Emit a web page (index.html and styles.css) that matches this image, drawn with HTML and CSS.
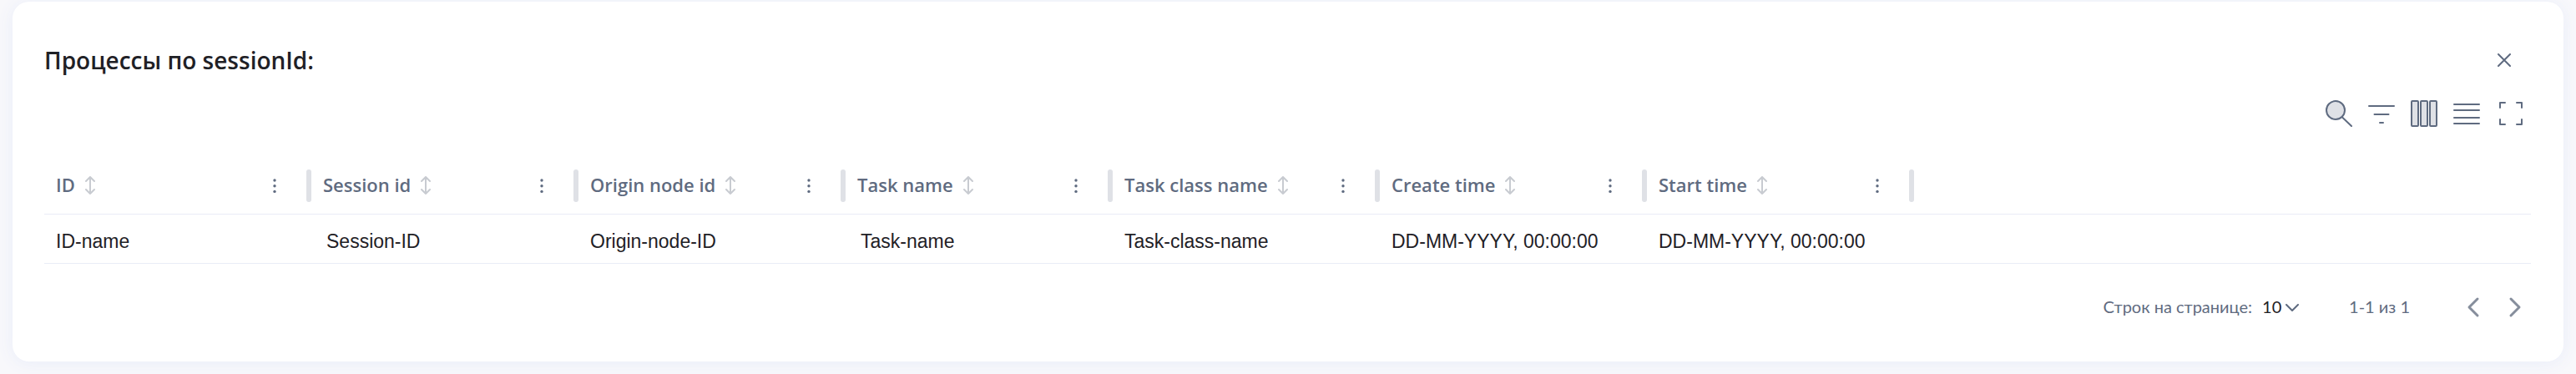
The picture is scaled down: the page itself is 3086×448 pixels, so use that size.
FILE: index.html
```html
<!DOCTYPE html>
<html lang="ru">
<head>
	<meta charset="UTF-8">
	<title>Процессы</title>
	<link rel="stylesheet" href="styles.css">
</head>
<body>
	<!-- общие иконки таблицы -->
	<svg class="sprite" aria-hidden="true">
		<symbol id="sort" viewBox="0 0 12 22"><path d="M6 1v20M1 6l5-5 5 5M1 16l5 5 5-5"/></symbol>
		<symbol id="dots" viewBox="0 0 4 18"><circle cx="2" cy="2" r="1.7"/><circle cx="2" cy="8.7" r="1.7"/><circle cx="2" cy="15.4" r="1.7"/></symbol>
	</svg>
	<main class="card">
		<div class="card-head">
			<h1>Процессы по sessionId:</h1>
			<button class="icon-btn" aria-label="Закрыть"><svg width="16" height="16" viewBox="0 0 16 16"><path d="M1 1l14 14M15 1L1 15"/></svg></button>
		</div>
		<div class="toolbar">
			<button class="icon-btn" aria-label="Поиск"><svg width="32" height="32" viewBox="0 0 32 32"><circle class="fill" cx="12" cy="12" r="11"/><path d="M20 20.500l11 10.500"/></svg></button>
			<button class="icon-btn" aria-label="Фильтр"><svg width="32" height="32" viewBox="0 0 32 32"><path d="M1 7h30M7.500 17h17M14 27h4"/></svg></button>
			<button class="icon-btn" aria-label="Колонки"><svg width="32" height="32" viewBox="0 0 32 32"><rect class="fill" x="1" y="1" width="8" height="30" rx="1"/><rect class="fill" x="12" y="1" width="8" height="30" rx="1"/><rect class="fill" x="23" y="1" width="8" height="30" rx="1"/></svg></button>
			<button class="icon-btn" aria-label="Плотность"><svg width="32" height="32" viewBox="0 0 32 32"><path d="M1 5h30M1 12h30M1 21h30M1 28h30"/></svg></button>
			<button class="icon-btn wide" aria-label="На весь экран"><svg width="32" height="32" viewBox="0 0 32 32"><path d="M3 9V3h6M23 3h6v6M29 23v6h-6M9 29H3v-6"/></svg></button>
		</div>
		<table>
			<colgroup>
				<col class="col" span="7">
				<col>
			</colgroup>
			<thead>
				<tr>
					<th><div class="th"><span>ID</span><svg class="sort"><use href="#sort"/></svg><button class="dots" aria-label="Меню"><svg><use href="#dots"/></svg></button><i class="handle"></i></div></th>
					<th><div class="th"><span>Session id</span><svg class="sort"><use href="#sort"/></svg><button class="dots" aria-label="Меню"><svg><use href="#dots"/></svg></button><i class="handle"></i></div></th>
					<th><div class="th"><span>Origin node id</span><svg class="sort"><use href="#sort"/></svg><button class="dots" aria-label="Меню"><svg><use href="#dots"/></svg></button><i class="handle"></i></div></th>
					<th><div class="th"><span>Task name</span><svg class="sort"><use href="#sort"/></svg><button class="dots" aria-label="Меню"><svg><use href="#dots"/></svg></button><i class="handle"></i></div></th>
					<th><div class="th"><span>Task class name</span><svg class="sort"><use href="#sort"/></svg><button class="dots" aria-label="Меню"><svg><use href="#dots"/></svg></button><i class="handle"></i></div></th>
					<th><div class="th"><span>Create time</span><svg class="sort"><use href="#sort"/></svg><button class="dots" aria-label="Меню"><svg><use href="#dots"/></svg></button><i class="handle"></i></div></th>
					<th><div class="th"><span>Start time</span><svg class="sort"><use href="#sort"/></svg><button class="dots" aria-label="Меню"><svg><use href="#dots"/></svg></button><i class="handle"></i></div></th>
					<td></td>
				</tr>
			</thead>
			<tbody>
				<tr>
					<td>ID-name</td>
					<td class="name">Session-ID</td>
					<td>Origin-node-ID</td>
					<td class="name">Task-name</td>
					<td>Task-class-name</td>
					<td>DD-MM-YYYY, 00:00:00</td>
					<td>DD-MM-YYYY, 00:00:00</td>
					<td></td>
				</tr>
			</tbody>
		</table>
		<div class="pager">
			<div class="rows">
				<label for="rows">Строк на странице:</label>
				<select id="rows"><option>10</option><option>20</option><option>50</option></select>
				<svg width="16" height="10" viewBox="0 0 16 10"><path d="M1 1l7 7 7-7"/></svg>
			</div>
			<span class="range">1-1 из 1</span>
			<div class="pages">
				<button class="icon-btn" aria-label="Назад"><svg width="12" height="22" viewBox="0 0 12 22"><path d="M11 1L1 11l10 10"/></svg></button>
				<button class="icon-btn" aria-label="Вперёд"><svg width="12" height="22" viewBox="0 0 12 22"><path d="M1 1l10 10L1 21"/></svg></button>
			</div>
		</div>
	</main>
</body>
</html>
```
FILE: styles.css
```css
* {margin:0; padding:0; box-sizing:border-box; }
body {min-height:100vh; padding:2px 15px 18px; background:#f8f8fb; font-family:Lato, "Noto Sans", sans-serif; color:#1f2126;}
button {border:0; background:none; cursor:pointer;}
svg {display:block; fill:none; stroke:#5f6b80; stroke-width:2; stroke-linecap:round; stroke-linejoin:round;}
.sprite {position:absolute; width:0; height:0;}

.card {padding:52px 39px 48px 38px; background:#fff; border-radius:20px; box-shadow:0 2px 20px #e9edf9;}
.card-head {display:flex; align-items:center; justify-content:space-between; height:36px; padding-right:16px;}
h1 {font-family:"Open Sans", sans-serif; font-size:28px; line-height:36px; font-weight:600;}
.icon-btn {display:flex; align-items:center; justify-content:center; width:32px; height:32px;}
.wide {width:36px;}

.toolbar {display:flex; justify-content:flex-end; gap:19px; margin-top:30px; padding-right:6px;}
.fill {fill:#dfe1e6;}

table {width:100%; margin-top:36px; table-layout:fixed; border-collapse:collapse;}
.col {width:320px;}
tr {border-bottom:1px solid #e9ecf7;}
th {font-family:"Open Sans", sans-serif; font-size:22px; line-height:28px; font-weight:600; color:#5f6b80; text-align:left;}
.th {display:flex; align-items:center; height:68px; padding-left:14px;}
.th span {padding-bottom:2px;}
.sort {width:12px; height:22px; margin-left:12px; stroke:#c8cbd1; stroke-width:2;}
.dots {margin-left:auto; padding:2px 14px 0;}
.dots svg {width:4px; height:18px; fill:#5f6b80; stroke:none;}
.handle {width:6px; height:39px; margin-left:22px; border-radius:3px; background:#dfe1e6;}
tbody td {height:59px; padding:6px 0 0 14px; font-family:"Liberation Sans", sans-serif; font-size:23px; line-height:28px;}
tbody td.name {padding-left:18px;}

.pager {display:flex; align-items:center; justify-content:flex-end; gap:60px; margin-top:35px; padding-right:3px; font-size:20px; line-height:32px; color:#5f6b80;}
.rows, .pages {display:flex; align-items:center;}
.rows, .range {padding-bottom:2px;}
.rows svg {margin:4px 0 0 4px;}
.pages {gap:18px;}
.pages svg {stroke:#868e9c; stroke-width:3; overflow:visible;}
select {width:24px; margin-left:12px; appearance:none; border:0; background:none; font:20px/32px Lato, "Noto Sans", sans-serif; color:#1f2126;}
```
